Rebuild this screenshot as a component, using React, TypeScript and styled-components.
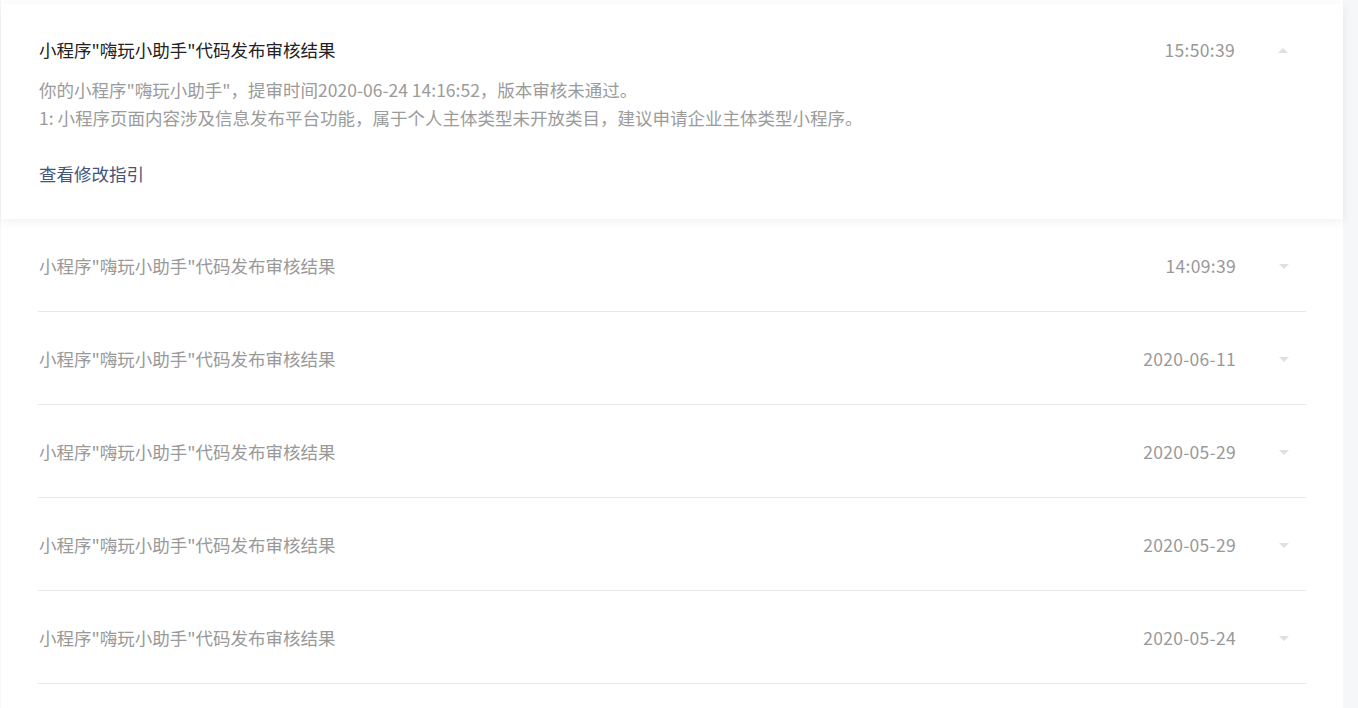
import styled, { createGlobalStyle } from "styled-components";

const GlobalStyle = createGlobalStyle`
  body {
    margin: 0;
    background: #f6f7f9;
    font-family: "Noto Sans CJK SC", "Noto Sans", sans-serif;
  }
`;

type Notice = { title: string; time: string };

const notices: Notice[] = [
  { title: '小程序"嗨玩小助手"代码发布审核结果', time: "14:09:39" },
  { title: '小程序"嗨玩小助手"代码发布审核结果', time: "2020-06-11" },
  { title: '小程序"嗨玩小助手"代码发布审核结果', time: "2020-05-29" },
  { title: '小程序"嗨玩小助手"代码发布审核结果', time: "2020-05-29" },
  { title: '小程序"嗨玩小助手"代码发布审核结果', time: "2020-05-24" },
];

function Arrow({ up }: { up?: boolean }) {
  return (
    <ArrowBox>
      <svg width="10" height="5" viewBox="0 0 10 5">
        <path d={up ? "M0 5 L5 0 L10 5 Z" : "M0 0 L10 0 L5 5 Z"} fill="#dfe0e4" />
      </svg>
    </ArrowBox>
  );
}

function App() {
  return (
    <>
      <GlobalStyle />
      <Page>
        <Expanded>
          <Head>
            <Title $active>小程序"嗨玩小助手"代码发布审核结果</Title>
            <Time>15:50:39</Time>
            <Arrow up />
          </Head>
          <Body>
            你的小程序"嗨玩小助手"，提审时间2020-06-24 14:16:52，版本审核未通过。
            <br />
            1: 小程序页面内容涉及信息发布平台功能，属于个人主体类型未开放类目，建议申请企业主体类型小程序。
            <br />
            <br />
            <Link>查看修改指引</Link>
          </Body>
        </Expanded>
        <List>
          {notices.map((n, i) => (
            <Row key={i}>
              <Title>{n.title}</Title>
              <Time>{n.time}</Time>
              <Arrow />
            </Row>
          ))}
        </List>
      </Page>
    </>
  );
}
export default App;

const Page = styled.div`
  width: 1342px;
  margin-left: 1px;
  padding-top: 4px;
  min-height: 704px;
  background: #fff;
`;

const Expanded = styled.div`
  position: relative;
  padding: 32px 38px 31px;
  background: #fff;
  box-shadow: 0 2px 10px rgba(20, 30, 60, 0.07);
`;

const Head = styled.div`
  display: flex;
  align-items: center;
  height: 28px;
`;

const Title = styled.div<{ $active?: boolean }>`
  flex: 1;
  font-size: 17.5px;
  line-height: 28px;
  color: ${(p) => (p.$active ? "#222" : "#999")};
`;

const Time = styled.div`
  font-size: 17.5px;
  line-height: 28px;
  letter-spacing: 0.3px;
  color: #999;
`;

const ArrowBox = styled.div`
  display: flex;
  justify-content: center;
  align-items: center;
  width: 10px;
  margin: 0 17px 0 43px;
`;

const Body = styled.div`
  margin-top: 12px;
  font-size: 17.5px;
  line-height: 28px;
  color: #9b9b9b;
`;

const Link = styled.span`
  color: #45547a;
  cursor: pointer;
`;

const List = styled.div`
  margin: 0 37px 0 37px;
`;

const Row = styled.div`
  display: flex;
  align-items: center;
  padding: 33px 0 31px 1px;
  border-bottom: 1px solid #e8e8ea;
`;
